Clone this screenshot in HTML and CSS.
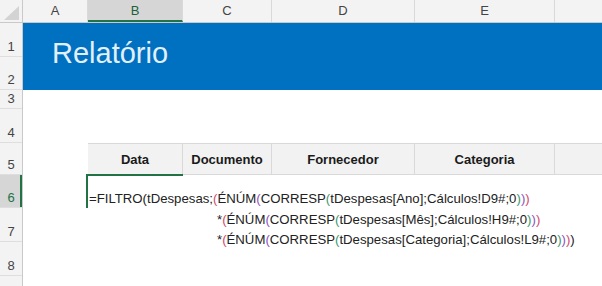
FILE: index.html
```html
<!DOCTYPE html>
<html lang="pt">
<head>
  <meta charset="UTF-8">
  <title>Relatório</title>
  <link rel="stylesheet" href="styles.css">
</head>
<body>
  <div class="sheet">
    <div class="col-heads">
      <div class="corner">
        <svg width="17" height="15" viewBox="0 0 17 15"><polygon points="16,0 16,14 1,14" fill="#d3d3d3"/></svg>
      </div>
      <div class="ch w-a">A</div>
      <div class="ch w-b active">B</div>
      <div class="ch w-c">C</div>
      <div class="ch w-d">D</div>
      <div class="ch w-e">E</div>
      <div class="ch w-f"></div>
    </div>

    <div class="body">
      <div class="row-heads">
        <div class="rh h1">1</div>
        <div class="rh h2">2</div>
        <div class="rh h3">3</div>
        <div class="rh h4">4</div>
        <div class="rh h5">5</div>
        <div class="rh h6 active">6</div>
        <div class="rh h7">7</div>
        <div class="rh h8">8</div>
        <div class="rh h9"></div>
      </div>

      <div class="cells">
        <div class="banner">Relatório</div>

        <div class="th col-b">Data</div>
        <div class="th col-c">Documento</div>
        <div class="th col-d">Fornecedor</div>
        <div class="th col-e">Categoria</div>
        <div class="th col-f"></div>

        <div class="active-cell"></div>

        <div class="formula">
          <div class="line">=FILTRO(tDespesas;<span class="p2">(</span>ÉNÚM<span class="p3">(</span>CORRESP<span class="p4">(</span>tDespesas[Ano];Cálculos!D9#;0<span class="p4">)</span><span class="p3">)</span><span class="p2">)</span></div>
          <div class="line indent">*<span class="p2">(</span>ÉNÚM<span class="p3">(</span>CORRESP<span class="p4">(</span>tDespesas[Mês];Cálculos!H9#;0<span class="p4">)</span><span class="p3">)</span><span class="p2">)</span></div>
          <div class="line indent">*<span class="p2">(</span>ÉNÚM<span class="p3">(</span>CORRESP<span class="p4">(</span>tDespesas[Categoria];Cálculos!L9#;0<span class="p4">)</span><span class="p3">)</span><span class="p2">)</span>)</div>
        </div>
      </div>
    </div>
  </div>
</body>
</html>
```

FILE: styles.css
```css
:root {
  --head-bg: #f3f3f3;
  --head-line: #d9d9d9;
  --sel-bg: #d6d6d6;
  --green: #217346;
  --blue: #0070c0;
  --text: #222222;
}
* { box-sizing: border-box; }
body {
  margin: 0;
  font-family: 'Liberation Sans', Arial, sans-serif;
  background: #fff;
  color: var(--text);
}
.sheet {
  width: 602px;
  height: 286px;
  overflow: hidden;
}

/* column headers */
.col-heads {
  display: flex;
  height: 23px;
  background: var(--head-bg);
  border-bottom: 1px solid #c9c9c9;
}
.corner {
  width: 23px;
  flex: none;
  display: flex;
  align-items: flex-end;
  justify-content: flex-end;
  padding: 0 2px 1px 0;
  border-right: 1px solid #c9c9c9;
}
.ch {
  flex: none;
  border-right: 1px solid var(--head-line);
  font-size: 13px;
  line-height: 22px;
  text-align: center;
  color: #444;
}
.ch.active {
  background: var(--sel-bg);
  border-bottom: 2px solid var(--green);
  color: #1f5f3a;
}
.w-a { width: 65px; }
.w-b { width: 95px; }
.w-c { width: 89px; }
.w-d { width: 143px; }
.w-e { width: 140px; }
.w-f { flex: 1; border-right: none; }

/* row headers */
.body { display: flex; }
.row-heads {
  width: 23px;
  flex: none;
  background: var(--head-bg);
  border-right: 1px solid #c9c9c9;
}
.rh {
  display: flex;
  align-items: flex-end;
  justify-content: center;
  padding-bottom: 1px;
  border-bottom: 1px solid #dedede;
  font-size: 13px;
  line-height: 16px;
  color: #444;
}
.rh.active {
  background: var(--sel-bg);
  color: var(--green);
  box-shadow: inset -2px 0 0 var(--green);
}
.h1 { height: 34px; }
.h2 { height: 33px; }
.h3 { height: 19px; }
.h4 { height: 34px; }
.h5 { height: 32px; }
.h6 { height: 33px; }
.h7 { height: 34px; }
.h8 { height: 34px; }
.h9 { height: 20px; border-bottom: none; }

/* cells */
.cells {
  flex: 1;
  display: grid;
  grid-template-columns: 65px 95px 89px 143px 140px 1fr;
  grid-template-rows: 34px 33px 19px 34px 32px 33px 34px 34px 1fr;
}
.banner {
  grid-column: 1 / -1;
  grid-row: 1 / 3;
  background: var(--blue);
  color: #e2f0fb;
  font-size: 29px;
  display: flex;
  align-items: center;
  padding: 0 0 6px 29px;
}
.th {
  grid-row: 5;
  background: #f2f2f2;
  border-top: 1px solid var(--head-line);
  border-bottom: 1px solid var(--head-line);
  border-right: 1px solid var(--head-line);
  display: flex;
  align-items: center;
  justify-content: center;
  font-size: 13px;
  font-weight: 700;
  color: #1a1a1a;
}
.col-b { grid-column: 2; }
.col-c { grid-column: 3; }
.col-d { grid-column: 4; }
.col-e { grid-column: 5; }
.col-f { grid-column: 6; border-right: none; }

.active-cell {
  grid-row: 6;
  grid-column: 2;
  margin: -1px 0 0 -2px;
  border-top: 2px solid var(--green);
  border-left: 2px solid var(--green);
}
.formula {
  grid-row: 6 / 9;
  grid-column: 2 / -1;
  padding: 14px 0 0 1px;
  font-size: 13.2px;
  line-height: 20.5px;
  white-space: nowrap;
  color: var(--text);
}
.line.indent { padding-left: 128px; }
.p2 { color: #d44a6c; }
.p3 { color: #9152c2; }
.p4 { color: #3d9a6c; }
```
